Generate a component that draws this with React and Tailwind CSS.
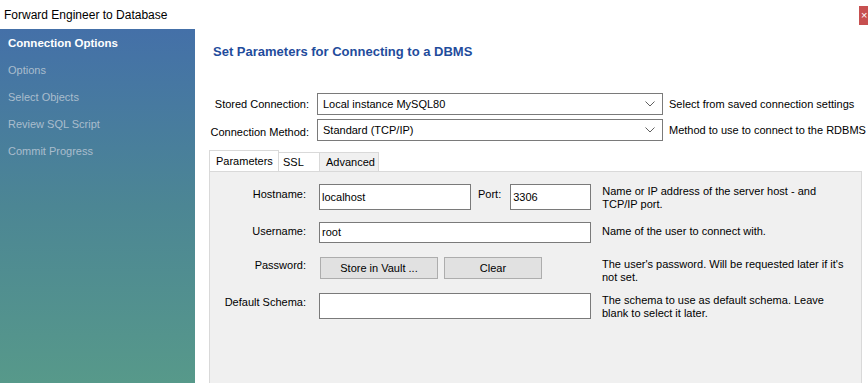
import React from 'react';

const steps = ['Options', 'Select Objects', 'Review SQL Script', 'Commit Progress'];

function Chevron() {
  return (
    <svg width="10" height="6" viewBox="0 0 10 6" className="text-[#606060]">
      <path d="M0.5 0.5 L5 5 L9.5 0.5" fill="none" stroke="currentColor" strokeWidth="1" />
    </svg>
  );
}

function Select({ value }) {
  return (
    <div className="w-[346px] h-[22px] border border-[#7a7a7a] bg-white flex items-center justify-between pl-[5px] pr-[7px]">
      <span>{value}</span>
      <Chevron />
    </div>
  );
}

function Field({ className = '', value }) {
  return (
    <div className={`border border-[#7a7a7a] bg-white flex items-center pl-[2px] shrink-0 ${className}`}>
      {value}
    </div>
  );
}

function Btn({ children, className = '' }) {
  return (
    <div className={`h-[22px] border border-[#adadad] bg-[#e1e1e1] flex items-center justify-center shrink-0 ${className}`}>
      {children}
    </div>
  );
}

export default function App() {
  return (
    <div className="w-[868px] h-[383px] overflow-hidden bg-white text-[11px] text-black flex flex-col whitespace-nowrap" style={{ fontFamily: '"Liberation Sans", Arial, sans-serif' }}>
      {/* title bar */}
      <div className="h-[29px] flex items-start justify-between shrink-0">
        <span className="text-[12px] pl-[4px] pt-[6px]">Forward Engineer to Database</span>
        <div className="mt-[6px] w-[9px] h-[19px] bg-[#c75050] text-white text-[11px] leading-[19px] pl-[2px] overflow-hidden">×</div>
      </div>

      <div className="flex flex-1 min-h-0">
        {/* sidebar */}
        <div className="w-[195px] shrink-0 bg-linear-to-b from-[#4470a8] via-[#4c8694] to-[#57998a] flex flex-col pl-[8px] pt-[1px]">
          <div className="h-[27px] flex items-center font-bold text-white text-[11.5px]">Connection Options</div>
          {steps.map((s) => (
            <div key={s} className="h-[27px] flex items-center text-[#aabdcd]">{s}</div>
          ))}
        </div>

        {/* main */}
        <div className="flex-1 flex flex-col pl-[14px] pt-[14px]">
          <h1 className="pl-[4px] pt-[1px] text-[13px] font-bold text-[#1f4c9c] leading-[16px]">Set Parameters for Connecting to a DBMS</h1>

          <div className="mt-[33px] flex flex-col gap-[4px]">
            <div className="flex items-center">
              <span className="w-[100px] text-right">Stored Connection:</span>
              <div className="ml-[8px]"><Select value="Local instance MySQL80" /></div>
              <span className="ml-[6px]">Select from saved connection settings</span>
            </div>
            <div className="flex items-center">
              <span className="w-[100px] text-right pt-[4px]">Connection Method:</span>
              <div className="ml-[8px]"><Select value="Standard (TCP/IP)" /></div>
              <span className="ml-[6px]">Method to use to connect to the RDBMS</span>
            </div>
          </div>

          {/* tabs */}
          <div className="mt-[9px] flex items-end h-[21px] pr-[6px]">
            <div className="h-[21px] w-[70px] bg-white border border-b-0 border-[#d9d9d9] flex items-center pl-[6px]">Parameters</div>
            <div className="h-[19px] w-[41px] bg-white border-t border-r border-[#d9d9d9] flex items-center pl-[4px]">SSL</div>
            <div className="h-[19px] w-[59px] bg-[#f0f0f0] border-t border-r border-[#d9d9d9] flex items-center pl-[6px]">Advanced</div>
          </div>

          {/* panel */}
          <div className="flex-1 mr-[6px] bg-[#f0f0f0] border border-b-0 border-[#d9d9d9] pt-[12px] flex flex-col">
            <div className="h-[38px] flex items-start">
              <span className="w-[96px] text-right pt-[2px]">Hostname:</span>
              <Field className="ml-[13px] w-[152px] h-[26px]" value="localhost" />
              <span className="ml-[7px] pt-[2px]">Port:</span>
              <Field className="ml-[9px] w-[81px] h-[26px]" value="3306" />
              <span className="ml-[11px] leading-[13px] pt-[1px] whitespace-normal w-[250px]">Name or IP address of the server host - and TCP/IP port.</span>
            </div>
            <div className="h-[35px] flex items-start">
              <span className="w-[96px] text-right pt-[1px]">Username:</span>
              <Field className="ml-[13px] w-[272px] h-[21px]" value="root" />
              <span className="ml-[11px] pt-[1px]">Name of the user to connect with.</span>
            </div>
            <div className="h-[36px] flex items-start">
              <span className="w-[96px] text-right">Password:</span>
              <Btn className="ml-[14px] w-[118px]">Store in Vault ...</Btn>
              <Btn className="ml-[6px] w-[98px]">Clear</Btn>
              <span className="ml-[60px] leading-[13px] pt-[1px] whitespace-normal w-[255px]">The user's password. Will be requested later if it's not set.</span>
            </div>
            <div className="flex items-start">
              <span className="w-[96px] text-right pt-[1px]">Default Schema:</span>
              <Field className="ml-[13px] w-[272px] h-[26px]" value="" />
              <span className="ml-[11px] leading-[13px] pt-[1px] whitespace-normal w-[240px]">The schema to use as default schema. Leave blank to select it later.</span>
            </div>
          </div>
        </div>
      </div>
    </div>
  );
}
